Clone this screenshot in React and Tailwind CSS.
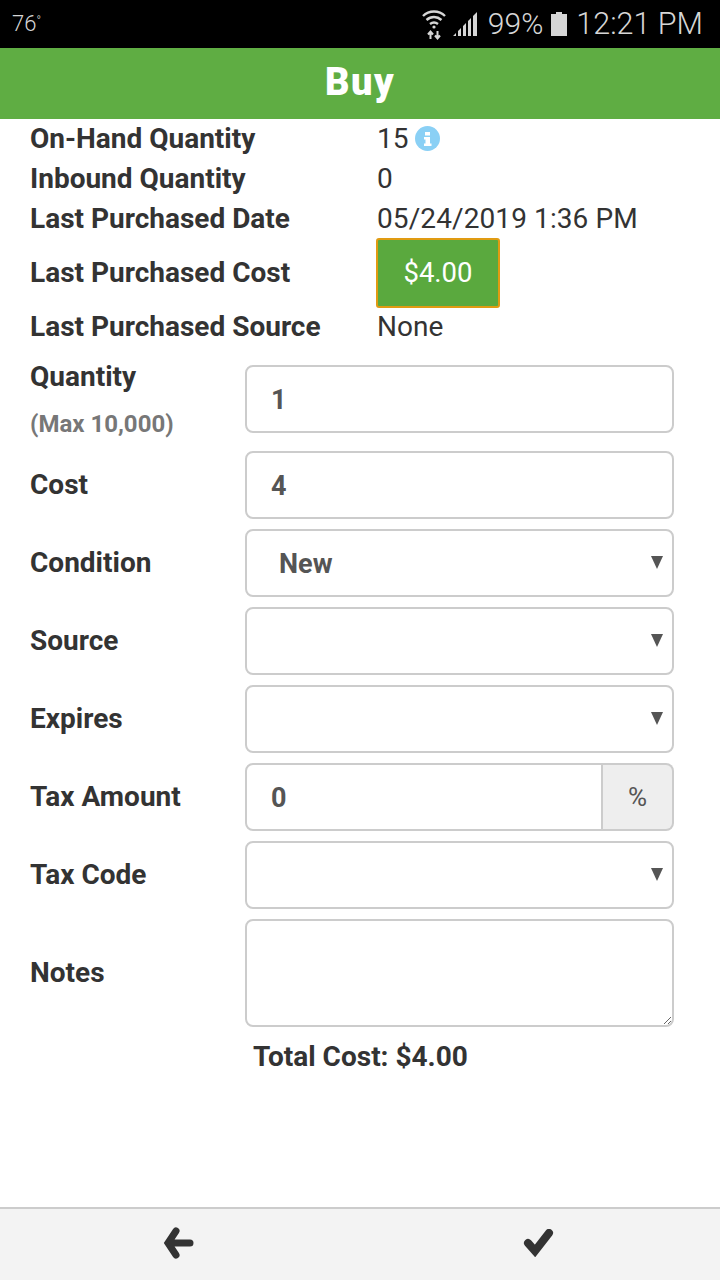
import React from "react";

const infoRows = [
  { label: "On-Hand Quantity", value: "15", info: true },
  { label: "Inbound Quantity", value: "0" },
  { label: "Last Purchased Date", value: "05/24/2019 1:36 PM" },
];

function Label({ children }) {
  return <div className="w-[215px] shrink-0 text-[28px] font-bold text-[#333]">{children}</div>;
}

function SelectRow({ label, value = "" }) {
  return (
    <div className="flex items-center h-[68px] mb-[10px]">
      <Label>{label}</Label>
      <div className="relative w-[429px] h-full">
        <select
          defaultValue={value}
          className="w-full h-full appearance-none bg-white border-2 border-[#ccc] rounded-lg pl-[32px] pt-[2px] text-[27px] font-bold text-[#555] outline-none"
        >
          <option value="">{""}</option>
          <option value="New">New</option>
        </select>
        <svg className="absolute right-[11px] top-[27px]" width="12" height="13" viewBox="0 0 12 13">
          <path d="M0 0H12L6 13Z" fill="#555" />
        </svg>
      </div>
    </div>
  );
}

function TextInput({ value }) {
  return (
    <input
      readOnly
      value={value}
      className="w-[429px] h-full bg-white border-2 border-[#ccc] rounded-lg px-[24px] pt-[2px] text-[27px] font-bold text-[#555] outline-none"
    />
  );
}

export default function App() {
  return (
    <div className="relative w-[720px] h-[1280px] flex flex-col bg-white overflow-hidden font-['Roboto',sans-serif]">
      {/* STATUS BAR */}
      <div className="h-12 shrink-0 bg-black flex items-center pl-3 pr-[17px] text-[#d6d6d6]">
        <span className="text-[22px] font-light leading-none">76<sup className="text-[12px]">°</sup></span>
        <div className="ml-auto flex items-center">
          <svg width="24" height="34" viewBox="0 0 24 34" fill="none" stroke="#d6d6d6" strokeWidth="2.4">
            <path d="M1 9C7 3 17 3 23 9" />
            <path d="M4.5 13C9 9 15 9 19.5 13" />
            <path d="M8 17C10.5 15 13.5 15 16 17" />
            <circle cx="12" cy="20" r="1.6" fill="#d6d6d6" stroke="none" />
            <path d="M8.5 32V25M6 27.5L8.5 24.5L11 27.5M15.5 24V31M13 28.5L15.5 31.5L18 28.5" strokeWidth="2" />
          </svg>
          <svg className="ml-[7px]" width="25" height="24" viewBox="0 0 25 24" fill="#d6d6d6">
            <path d="M0 24L3 21V24ZM5 24V19L8 16V24ZM10 24V14L13 11V24ZM15 24V9L18 6V24ZM20 24V4L24 0V24Z" />
          </svg>
          <span className="ml-[10px] text-[30px] font-light leading-none">99%</span>
          <svg className="ml-[8px]" width="16" height="24" viewBox="0 0 16 24" fill="#d6d6d6">
            <path d="M5 0H11V2H16V24H0V2H5Z" />
          </svg>
          <span className="ml-[9px] text-[30.5px] font-light leading-none">12:21 PM</span>
        </div>
      </div>

      {/* HEADER */}
      <div className="h-[71px] shrink-0 bg-[#5fad43] flex items-center justify-center">
        <span className="-mt-[2px] text-[38px] font-black text-white tracking-[1.5px]">Buy</span>
      </div>

      <div className="flex-1 px-[30px] text-[#333]">
        {/* SUMMARY */}
        <div>
          {infoRows.map((r) => (
            <div key={r.label} className="flex items-center h-10">
              <div className="w-[347px] text-[28px] font-bold">{r.label}</div>
              <span className="text-[28px] tracking-[0.1px]">{r.value}</span>
              {r.info && (
                <svg className="ml-[6px] -mt-[1px]" width="25" height="25" viewBox="0 0 25 25">
                  <circle cx="12.5" cy="12.5" r="12.5" fill="#8ad0f5" />
                  <path d="M10 6H15V9.5H10ZM9 11H15V17.5H16.5V20H9V17.5H10.5V13.5H9Z" fill="#fff" />
                </svg>
              )}
            </div>
          ))}
          <div className="flex items-center h-[69px]">
            <div className="w-[346px] -mt-[1px] text-[28px] font-bold">Last Purchased Cost</div>
            <button className="w-[124px] h-[70px] -mt-[1px] bg-[#5aa93e] border-2 border-[#e09b12] rounded-[3px] text-[27.5px] text-white">
              $4.00
            </button>
          </div>
          <div className="flex items-center h-[38px]">
            <div className="w-[347px] text-[28px] font-bold">Last Purchased Source</div>
            <span className="text-[28px]">None</span>
          </div>
        </div>

        {/* FORM */}
        <div className="mt-[19px]">
          <div className="flex h-[68px] mb-[18px]">
            <div className="w-[215px] shrink-0">
              <div className="text-[28px] font-bold text-[#333] leading-[24px]">Quantity</div>
              <div className="mt-[23px] text-[24px] font-bold text-[#777] leading-[24px]">(Max 10,000)</div>
            </div>
            <TextInput value="1" />
          </div>
          <div className="flex items-center h-[68px] mb-[10px]">
            <Label>Cost</Label>
            <TextInput value="4" />
          </div>
          <SelectRow label="Condition" value="New" />
          <SelectRow label="Source" />
          <SelectRow label="Expires" />
          <div className="flex items-center h-[68px] mb-[10px]">
            <Label>Tax Amount</Label>
            <div className="flex w-[429px] h-full">
              <input
                readOnly
                value="0"
                className="flex-1 min-w-0 h-full bg-white border-2 border-[#ccc] rounded-l-lg px-[24px] pt-[2px] text-[27px] font-bold text-[#555] outline-none"
              />
              <div className="w-[71px] h-full flex items-center justify-center bg-[#eee] border-2 border-l-0 border-[#ccc] rounded-r-lg text-[26px] text-[#555]">
                %
              </div>
            </div>
          </div>
          <SelectRow label="Tax Code" />
          <div className="flex items-center h-[108px]">
            <Label>Notes</Label>
            <textarea
              readOnly
              className="block w-[429px] h-full bg-white border-2 border-[#ccc] rounded-lg outline-none"
            />
          </div>
          <div className="mt-[12px] pl-[223px] text-[28px] font-bold leading-[36px] text-[#333]">Total Cost: $4.00</div>
        </div>
      </div>

      {/* FOOTER */}
      <div className="h-[73px] shrink-0 bg-[#f3f3f3] border-t-2 border-[#ccc] grid grid-cols-2 pb-1">
        <div className="flex items-center justify-center">
          <svg className="-ml-[2px]" width="32" height="32" viewBox="0 0 32 32" fill="none" stroke="#333" strokeWidth="7" strokeLinecap="round" strokeLinejoin="miter">
            <path d="M13 4L5 16L13 28M7 16H27" />
          </svg>
        </div>
        <div className="flex items-center justify-center">
          <svg className="-ml-[3px]" width="32" height="28" viewBox="0 0 32 28" fill="none" stroke="#333" strokeWidth="8" strokeLinecap="round" strokeLinejoin="miter">
            <path d="M5 14L12 22L26 4" />
          </svg>
        </div>
      </div>
    </div>
  );
}
